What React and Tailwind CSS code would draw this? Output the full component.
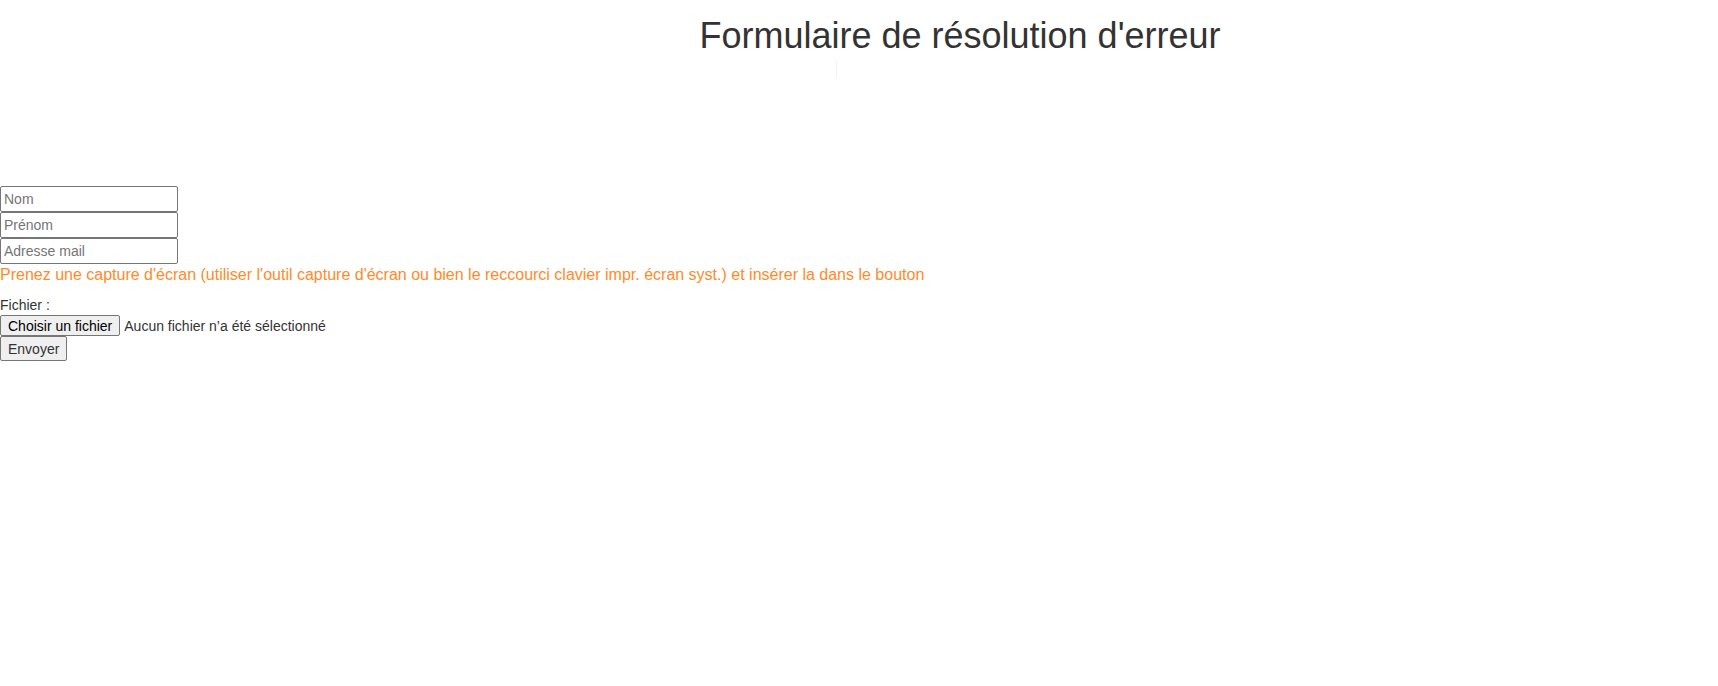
export default function App() {
  const inputCls =
    "box-border h-[26px] w-[178px] rounded-[2px] border border-[#767676] px-[3px] py-[2px] text-[14px] leading-[20px] text-[#333] placeholder:text-[#757575] outline-none";
  return (
    <div className="min-h-[686px] bg-white font-['Liberation_Sans',Arial,sans-serif] text-[14px] leading-[20px] text-[#333]">
      <header className="relative h-[186px]">
        <h1 className="pt-[16px] pl-[202px] text-center text-[36px] leading-[40px] font-normal text-[#333]">
          Formulaire de résolution d'erreur
        </h1>
        <div className="absolute left-[836px] top-[60px] h-[17px] w-px bg-[#f5f1f1]" />
      </header>
      <form className="flex flex-col items-start" onSubmit={(e) => e.preventDefault()}>
        <input type="text" placeholder="Nom" className={inputCls} />
        <input type="text" placeholder="Prénom" className={inputCls} />
        <input type="email" placeholder="Adresse mail" className={inputCls} />
        <p className="text-[16px] leading-[22px] text-[#ff8a2a]">
          Prenez une capture d'écran (utiliser l'outil capture d'écran ou bien le reccourci clavier impr. écran syst.) et insérer la dans le bouton
        </p>
        <label className="mt-[9px] block h-[20px] leading-[20px] text-[#333]">Fichier :</label>
        <div className="flex h-[21px] items-center">
          <button
            type="button"
            className="box-border h-[21px] rounded-[2px] border border-[#767676] bg-[#efefef] px-[7px] text-[14px] leading-[18px] text-black"
          >
            Choisir un fichier
          </button>
          <span className="ml-[4px] text-[14px] leading-[20px] text-[#333]">Aucun fichier n’a été sélectionné</span>
        </div>
        <button
          type="submit"
          className="box-border h-[25px] rounded-[2px] border border-[#767676] bg-[#efefef] px-[7px] text-[14px] leading-[20px] text-[#333]"
        >
          Envoyer
        </button>
      </form>
    </div>
  );
}
